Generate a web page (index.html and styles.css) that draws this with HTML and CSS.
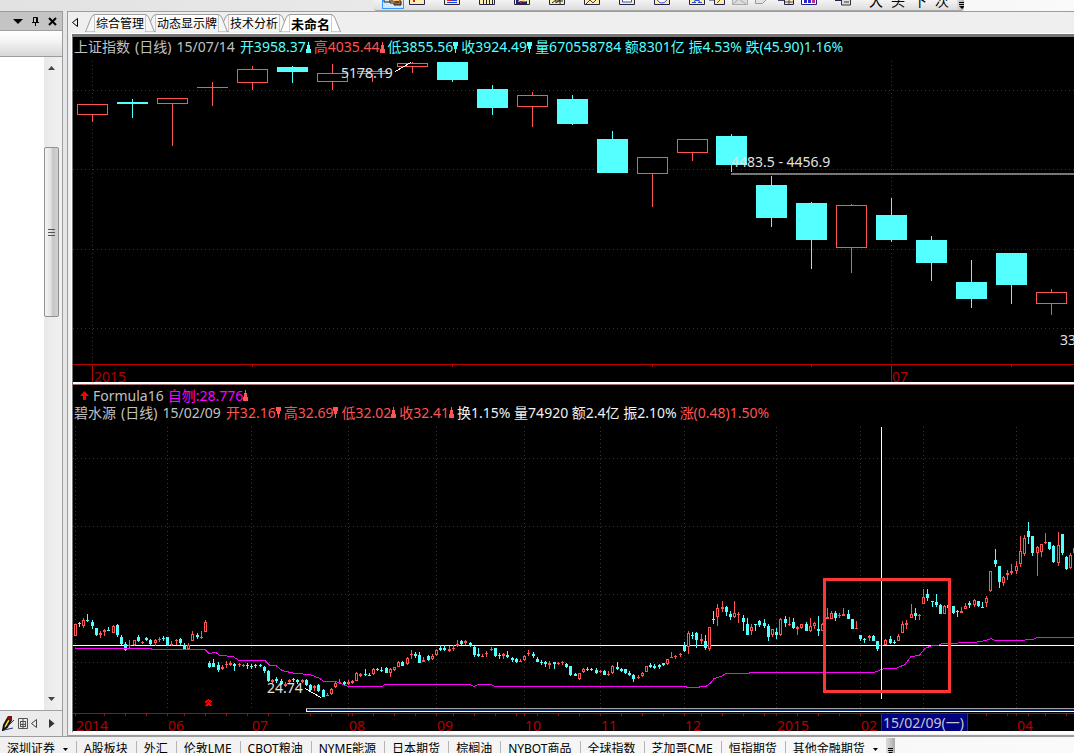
FILE: index.html
```html
<!DOCTYPE html>
<html lang="zh-CN">
<head>
  <meta charset="UTF-8">
  <meta name="viewport" content="width=device-width, initial-scale=1.0">
  <title>上证指数</title>
  <link rel="stylesheet" href="styles.css">
</head>
<body>
  <div class="top-strip">
    <div class="toolbar">
      <button class="tool active" aria-label="手型"><svg width="20" height="6"><path d="M1 0h5v2h5v3h7V0z" fill="#a8682c"/><path d="M1 0v2h6v1h4v2h7V1M13 0v3M15 0v3" fill="none" stroke="#222"/><path d="M10 0h6v1h-6z" fill="#f4c07c"/></svg></button>
      <button class="tool" aria-label="标记"><svg width="16" height="5"><path class="note" d="M.5-5v9.500h15v-9.500z"/><path d="M4 0h2v2H4z" fill="#d02020"/></svg></button>
      <button class="tool" aria-label="表格"><svg width="16" height="5"><path class="note" d="M.5-5v9.500h15v-9.500z"/><path d="M3 .5h4" stroke="#e02020"/><path d="M7 .5h6M3 2.500h10" stroke="#2040e0"/></svg></button>
      <button class="tool" aria-label="柱线"><svg width="16" height="5"><path class="note" d="M.5-5v9.500h15v-9.500z"/><path d="M4.500 0v4M7.500 0v4M10.500 0v4M13.500 0v4" stroke="#222"/></svg></button>
      <button class="tool" aria-label="走势"><svg width="16" height="5"><path class="note" d="M.5-5v9.500h15v-9.500z"/><path d="M2 4V0h3l-1 2 3-1 3 1 3-1v3z" fill="#202070"/><path d="M6 3l3-2 2 1" stroke="#e04020" fill="none"/></svg></button>
      <button class="tool" aria-label="分析"><svg width="16" height="5"><path class="note" d="M.5-5v9.500h15v-9.500z"/><path d="M3 3l4-3v3l4-3v4M8 1h6" fill="none" stroke="#222"/></svg></button>
      <button class="tool" aria-label="折线"><svg width="16" height="5"><path class="note" d="M.5-5v9.500h15v-9.500z"/><path d="M2 4l4-4 3 3 4-4" fill="none" stroke="#444"/></svg></button>
      <button class="tool" aria-label="矩形"><svg width="16" height="5"><path class="note" d="M.5-5v9.500h15v-9.500z"/><path d="M3.500-3v5h9v-5" fill="#fff" stroke="#2850e0"/></svg></button>
      <button class="tool" aria-label="圆形"><svg width="16" height="5"><path class="note" d="M.5-5v9.500h15v-9.500z"/><circle cx="8" cy="-2" r="5" fill="#fff" stroke="#2850e0"/></svg></button>
      <button class="tool narrow" aria-label="文字"><svg width="16" height="5"><path class="note" d="M.5-5v9.500h15v-9.500z"/><path d="M3 2.500h4M9 2.500h4M5.500 2l1-3M10.500 2l-1-3M6 .5h4" fill="none" stroke="#2850e0"/></svg></button>
      <button class="tool small" aria-label="删除"><svg width="16" height="5"><path class="note" d="M5.500-5v9.500h10v-9.500z"/><path d="M0 .5h5" stroke="#889"/><path d="M8 3l4-4" stroke="#d02020"/></svg></button>
      <button class="tool small" aria-label="信封"><svg width="16" height="5"><path d="M.5-5v9.500h15v-9.500z" fill="#ddd" stroke="#aaa"/><path d="M1 4l6-5 7 5" stroke="#aaa" fill="none"/></svg></button>
      <button class="tool small" aria-label="立方体"><svg width="16" height="5"><path d="M.5-4v7.500h7l4-4v-4z" fill="#e4e4e4" stroke="#999"/></svg></button>
      <button class="tool small" aria-label="数据"><svg width="16" height="5"><path class="note" d="M6.500-5v9.500h9v-9.500z"/><path d="M0 .5h6M7 2h8M11 0v4" stroke="#447" /></svg></button>
      <button class="tool small" aria-label="统计"><svg width="16" height="5"><path d="M.5-5v9.500h15v-9.500z" fill="#fff" stroke="#202070"/><path d="M3 0h3v3H3zM7-1h3v4H7z" fill="#2828d0"/><path d="M11-1h3v4h-3z" fill="#c02890"/></svg></button>
      <button class="tool spaced" aria-label="计算"><svg width="16" height="6"><path class="note" d="M0-3v3.500h15v-4z"/><path d="M6.500-2v7h9v-7z" fill="#ddd" stroke="#333"/><path d="M9 2h5" stroke="#333"/></svg></button>
      <button class="tool word">大</button>
      <button class="tool word">头</button>
      <button class="tool word">下</button>
      <button class="tool word">次</button>
      <button class="grip" aria-label="更多"><svg width="9" height="10"><path d="M2 2.500h6M2 4.500h6" stroke="#000"/><path d="M2 6h6l-3 3z"/></svg></button>
    </div>
  </div>

  <div class="workspace">
    <aside class="side">
      <div class="side-title">
        <button class="icon" aria-label="菜单"><svg width="10" height="10"><path d="M0 3h10L5 8z"/></svg></button>
        <button class="icon" aria-label="固定"><svg width="9" height="10"><path d="M2.500 6V1.500h4V6M1 6.500h7M4.500 7v3M5.500 1v5" fill="none" stroke="#000"/></svg></button>
        <button class="icon" aria-label="关闭"><svg width="9" height="9"><path d="M1 1l7 7M8 1L1 8" stroke="#000" stroke-width="2"/></svg></button>
      </div>
      <div class="side-tools"></div>
      <div class="side-list">
        <div class="scroll">
          <svg width="8" height="5"><path d="M0 5h7L3.500 1z" fill="#444"/></svg>
          <div class="thumb"><svg width="7" height="9"><path d="M0 1.500h7M0 4.500h7M0 7.500h7" stroke="#555"/></svg></div>
          <svg width="8" height="5"><path d="M0 0h7L3.500 4z" fill="#444"/></svg>
        </div>
      </div>
      <div class="side-foot">
        <button class="icon" aria-label="编辑"><svg width="13" height="15"><path d="M2 9l4-7 3 2-4 7-4 3z" fill="#ffd83c" stroke="#111" stroke-width="2"/><path d="M6 0h4v3l-2 2-3-2z" fill="#801010"/><path d="M2 14l9-2M6 10l6-6" stroke="#2030a0"/></svg></button>
        <button class="icon" aria-label="网格"><svg width="10" height="11"><path d="M.5.5h9v10h-9zM2 3.500h6M2 6.500h6M2 8.500h6M5 1v9M2.500 3v5M7.500 3v5" fill="none" stroke="#555"/></svg></button>
        <button class="icon" aria-label="向左"><svg width="6" height="9"><path d="M5.500.5v8l-5-4z" fill="none" stroke="#444"/></svg></button>
        <button class="icon last" aria-label="向右"><svg width="6" height="9"><path d="M0 0v9l5.500-4.500z" fill="#333"/></svg></button>
      </div>
    </aside>

    <main class="window">
      <nav class="tabs">
        <button class="icon back" aria-label="后退"><svg width="6" height="9"><path d="M5.500.5v8l-5-4z" fill="none" stroke="#000"/></svg></button>
        <button class="tab first"><svg class="edge left" width="10" height="18"><path d="M.5 18L6 4Q7.500.5 10 .5V18z"/></svg><span>综合管理</span><svg class="edge right" width="10" height="18"><path d="M9.500 18L4 4Q2.500.5 0 .5V18z"/></svg></button>
        <button class="tab second"><svg class="edge left" width="10" height="18"><path d="M.5 18L6 4Q7.500.5 10 .5V18z"/></svg><span>动态显示牌</span><svg class="edge right" width="10" height="18"><path d="M9.500 18L4 4Q2.500.5 0 .5V18z"/></svg></button>
        <button class="tab"><svg class="edge left" width="10" height="18"><path d="M.5 18L6 4Q7.500.5 10 .5V18z"/></svg><span>技术分析</span><svg class="edge right" width="10" height="18"><path d="M9.500 18L4 4Q2.500.5 0 .5V18z"/></svg></button>
        <button class="tab current"><svg class="edge left" width="10" height="18"><path d="M.5 18L6 4Q7.500.5 10 .5V18z"/></svg><span>未命名</span><svg class="edge right" width="10" height="18"><path d="M9.500 18L4 4Q2.500.5 0 .5V18z"/></svg></button>
      </nav>

      <div class="charts">
        <section class="pane pane-index">
          <p class="quote">
            <span class="security"><b>上证指数</b><b>(日线)</b><b>15/07/14</b></span>
            <span class="down">开3958.37<svg class="mark" width="5" height="11"><path d="M2 0h1v3h1v4h1v4H0V7h1V3h1z"/></svg></span>
            <span class="up">高4035.44<svg class="mark" width="5" height="11"><path d="M2 0h1v3h1v4h1v4H0V7h1V3h1z"/></svg></span>
            <span class="down">低3855.56<svg class="mark" width="5" height="11"><path d="M0 0h5v4H4v3H3v4H2V7H1V4H0z"/></svg></span>
            <span class="down">收3924.49<svg class="mark" width="5" height="11"><path d="M0 0h5v4H4v3H3v4H2V7H1V4H0z"/></svg></span>
            <span class="down">量670558784 额8301亿 振4.53% 跌(45.90)1.16%</span>
          </p>
          <svg class="plot" id="index-plot"></svg>
        </section>
        <section class="pane pane-stock">
          <p class="quote formula">
            <svg width="9" height="9"><path d="M4.500 0L9 5H6v4H3V5H0z" fill="#f00"/></svg>
            <span>Formula16</span>
            <span class="magenta">自刎:28.776<svg class="mark" width="5" height="11"><path d="M2 0h1v3h1v4h1v4H0V7h1V3h1z" fill="#ff5454"/></svg></span>
          </p>
          <p class="quote">
            <span class="security"><b>碧水源</b><b>(日线)</b><b>15/02/09</b></span>
            <span class="up">开32.16<svg class="mark" width="5" height="11"><path d="M0 0h5v4H4v3H3v4H2V7H1V4H0z"/></svg></span>
            <span class="up">高32.69<svg class="mark" width="5" height="11"><path d="M0 0h5v4H4v3H3v4H2V7H1V4H0z"/></svg></span>
            <span class="up">低32.02<svg class="mark" width="5" height="11"><path d="M2 0h1v3h1v4h1v4H0V7h1V3h1z"/></svg></span>
            <span class="up">收32.41<svg class="mark" width="5" height="11"><path d="M2 0h1v3h1v4h1v4H0V7h1V3h1z"/></svg></span>
            <span class="plain">换1.15% 量74920 额2.4亿 振2.10%</span>
            <span class="up">涨(0.48)1.50%</span>
          </p>
          <svg class="plot" id="stock-plot"></svg>
        </section>
      </div>
    </main>
  </div>

  <footer class="markets">
    <button class="market menu">深圳证券<svg width="5" height="3"><path d="M0 0h5L2.500 3z"/></svg></button>
    <button class="market">A股板块</button>
    <button class="market">外汇</button>
    <button class="market">伦敦LME</button>
    <button class="market">CBOT粮油</button>
    <button class="market">NYME能源</button>
    <button class="market">日本期货</button>
    <button class="market">棕榈油</button>
    <button class="market">NYBOT商品</button>
    <button class="market">全球指数</button>
    <button class="market">芝加哥CME</button>
    <button class="market">恒指期货</button>
    <button class="market menu">其他金融期货<svg width="5" height="3"><path d="M0 0h5L2.500 3z"/></svg></button>
    <button class="grip" aria-label="更多"><svg width="9" height="16"><path d="M2 10.500h5M2 12.500h5" stroke="#000"/><path d="M2 14h5l-2.500 2z"/></svg></button>
  </footer>
  <script src="charts.js"></script>
</body>
</html>
```

FILE: styles.css
```css
* {
  box-sizing: border-box;
}

body {
  display: flex;
  flex-direction: column;
  height: 100vh;
  margin: 0;
  overflow: hidden;
  background: #e6e6e6;
  color: #000;
  font-family: "Noto Sans", "Noto Sans CJK SC", sans-serif;
  font-size: 12px;
}

button {
  margin: 0;
  padding: 0;
  border: none;
  background: none;
  color: inherit;
  font: inherit;
}

svg {
  display: block;
  flex: none;
}

/* top toolbar */
.top-strip {
  flex: none;
  height: 11px;
  padding-left: 374px;
  background: linear-gradient(to right, #e2e2e2, #e9e9e9 35%, #fafafa);
}

.toolbar {
  display: flex;
  width: 590px;
  height: 11px;
  padding-left: 8px;
  background: linear-gradient(#f4f4f4, #dcdcdc);
  border-bottom: 1px solid #a6a6a6;
  border-radius: 0 0 3px 3px;
  overflow: hidden;
}

.tool {
  display: flex;
  flex: none;
  width: 35px;
  height: 9px;
}

.tool.active {
  width: 22px;
  margin-right: 5px;
  border: 1px solid #3399ff;
  border-top: none;
  background: #d4e8fb;
}

.tool.narrow {
  width: 20px;
}

.tool.small {
  width: 23px;
}

.tool.spaced {
  width: 34px;
  margin-left: 11px;
}

.tool.word {
  width: 22px;
  height: 6px;
  font-size: 14px;
  line-height: 1px;
}

.note {
  fill: #fdeeb0;
  stroke: #222244;
}

.grip {
  margin-left: auto;
  background: linear-gradient(to right, #ddd, #aaa);
}

/* main area */
.workspace {
  display: flex;
  flex: 1;
  min-height: 0;
  gap: 4px;
}

.icon {
  display: flex;
  align-items: center;
}

.side {
  display: flex;
  flex: none;
  flex-direction: column;
  width: 63px;
  background: #ebebeb;
  border-right: 1px solid #9c9c9c;
}

.side-title {
  display: flex;
  align-items: center;
  justify-content: flex-end;
  gap: 8px;
  height: 20px;
  padding-right: 5px;
  background: #c4c4c4;
  border-top: 1px solid #9c9c9c;
  border-bottom: 1px solid #a0a0a0;
}

.side-tools {
  height: 26px;
  background: linear-gradient(#fff, #f4f4f4 40%, #d8d8d8);
  border-bottom: 1px solid #9c9c9c;
}

.side-list {
  display: flex;
  flex: 1;
  justify-content: flex-end;
  background: #fff;
  border-bottom: 1px solid #a0a0a0;
}

.scroll {
  display: flex;
  flex-direction: column;
  align-items: center;
  width: 18px;
  padding: 8px 3px 8px 0;
  background: linear-gradient(to right, #e9e9e9, #f1f1f1);
}

.thumb {
  display: flex;
  align-items: center;
  justify-content: center;
  width: 15px;
  height: 170px;
  margin: 77px 0 auto;
  background: linear-gradient(to right, #f4f4f4, #e2e2e2 45%, #c6c6c6 60%, #d2d2d2);
  border: 1px solid #909090;
  border-radius: 2px;
}

.side-foot {
  display: flex;
  align-items: center;
  gap: 3px;
  height: 25px;
  padding-left: 2px;
}

.side-foot .last {
  margin-left: 9px;
}

.window {
  display: flex;
  flex: 1;
  flex-direction: column;
  min-width: 0;
  padding: 0 0 2px 4px;
  background: #efefef;
  border: 1px solid #9c9c9c;
  border-right: none;
}

.tabs {
  display: flex;
  flex: none;
  align-items: flex-end;
  height: 22px;
  padding-bottom: 2px;
}

.back {
  align-self: center;
  margin-right: 7px;
}

/* each tab sits a little under the one before it */
.tab {
  position: relative;
  display: flex;
  height: 18px;
  margin-right: -9px;
}

.tab.first {
  z-index: 2;
}

.tab.second {
  z-index: 1;
}

.tab.current {
  z-index: 3;
  font-size: 13px;
  font-weight: bold;
}

.tab span {
  height: 18px;
  padding: 0 1px;
  line-height: 18px;
  background: linear-gradient(#fff, #f0f0f0);
  border-top: 1px solid #9c9c9c;
}

.edge path {
  fill: #f6f6f6;
  stroke: #9c9c9c;
}

.tab.current span {
  background: #fff;
}

.tab.current .edge path {
  fill: #fff;
}

/* charts */
.charts {
  display: flex;
  flex: 1;
  flex-direction: column;
  min-height: 0;
  border-top: 3px solid #777;
  border-left: 1px solid #777;
  border-bottom: 2px solid #fff;
  outline: 1px solid #fff;
}

.pane {
  display: flex;
  flex-direction: column;
  min-height: 0;
  overflow: hidden;
  background: #000;
}

.pane-index {
  flex: none;
  height: 345px;
}

.pane-stock {
  flex: 1;
  padding-top: 3px;
  border-top: 2px solid #fff;
  box-shadow: inset 0 1px 0 #a06a6a;
}

.quote {
  display: flex;
  flex: none;
  gap: 3px;
  height: 20px;
  margin: 0;
  padding-left: 1px;
  color: #c0c0c0;
  font-size: 14px;
  line-height: 20px;
  white-space: nowrap;
}

.quote span {
  display: flex;
  align-items: center;
}

.quote b {
  font-weight: normal;
}

.quote .security {
  gap: 5px;
  margin-right: 2px;
}

.pane-stock .quote {
  height: 17px;
  line-height: 17px;
}

.pane-stock .formula {
  gap: 4px;
  align-items: center;
  padding-left: 7px;
}

.mark {
  fill: currentColor;
}

.up {
  color: #ff5454;
}

.down {
  color: #54ffff;
}

.plain {
  color: #f0f0f0;
}

.magenta {
  color: #ff00ff;
}

.plot {
  flex: 1;
  width: 100%;
  min-height: 0;
  overflow: hidden;
  font-size: 14px;
  shape-rendering: crispEdges;
}

.grid {
  stroke: #b00000;
  stroke-dasharray: 1 3;
}

.axis {
  fill: none;
  stroke: #c00000;
}

.axis-label {
  fill: #b00000;
}

.price {
  fill: #e0e0e0;
}

.rising {
  fill: #000;
  stroke: #ff5454;
}

.falling {
  fill: #54ffff;
  stroke: #54ffff;
}

.average {
  fill: none;
  stroke: #ff00ff;
}

.average.flat {
  stroke: #00e000;
}

.cross {
  stroke: #fff;
}

.focus-box {
  fill: none;
  stroke: #ff3636;
  stroke-width: 3;
}

.level {
  stroke: #777;
  stroke-width: 2;
}

.date-box {
  fill: #000080;
  stroke: #c00000;
}

.date-label {
  fill: #c8c8c8;
}

/* market tabs */
.markets {
  display: flex;
  flex: none;
  height: 17px;
  padding-top: 4px;
  overflow: hidden;
  background: linear-gradient(to right, #f0f0f0, #fafafa);
  border-top: 1px solid #9c9c9c;
}

.market {
  display: flex;
  flex: none;
  height: 16px;
  padding: 0 8px 0 7px;
  line-height: 16px;
  white-space: nowrap;
  border-left: 1px solid #b4b4b4;
}

.market:first-child {
  border-left: none;
}

.market.menu svg {
  margin: 7px 0 0 8px;
}

.markets .grip {
  height: 16px;
  margin: -3px 0 0;
}
```

FILE: charts.js
```js
const NS = 'http://www.w3.org/2000/svg';

// x, high, body top, body bottom, low, direction
const indexCandles = [
  [92, 104, 104, 115, 122, 'u'], [132, 99, 102, 104, 118, 'd'], [172, 98, 98, 104, 146, 'u'],
  [212, 82, 87, 88, 106, 'u'], [252, 66, 69, 83, 90, 'u'], [292, 66, 67, 72, 83, 'd'],
  [332, 64, 73, 82, 90, 'u'], [372, 70, 71, 74, 82, 'u'], [412, 62, 63, 67, 73, 'u'],
  [452, 62, 62, 80, 82, 'd'], [492, 85, 89, 108, 115, 'd'], [532, 92, 95, 107, 127, 'u'],
  [572, 95, 99, 124, 125, 'd'], [612, 131, 139, 173, 173, 'd'], [652, 157, 157, 174, 207, 'u'],
  [692, 139, 139, 153, 161, 'u'], [731, 134, 136, 165, 172, 'd'], [771, 176, 185, 218, 227, 'd'],
  [811, 202, 203, 240, 269, 'd'], [851, 204, 205, 248, 273, 'u'], [891, 198, 215, 240, 242, 'd'],
  [931, 236, 240, 263, 281, 'd'], [971, 260, 282, 299, 308, 'd'], [1011, 253, 253, 285, 304, 'd'],
  [1051, 289, 292, 304, 315, 'u']
];

// direction, high, body top, body bottom, low
const stockCandles = `
u 624 624 636 636;d 622 623 624 627;u 618 620 626 628;d 614 620 621 622;d 620 622 626 629;
d 628 628 635 636;u 631 633 635 638;u 629 630 632 636;d 627 630 631 631;u 625 626 633 633;
d 624 625 635 637;d 635 637 644 645;d 642 644 650 651;u 640 645 646 648;u 640 640 645 646;
d 635 637 641 642;u 641 642 643 644;d 637 638 640 641;d 639 640 644 645;u 639 640 643 646;
u 637 639 640 642;d 636 638 639 641;d 637 637 645 646;u 641 644 645 646;u 639 640 641 645;
d 638 639 643 645;d 643 645 649 649;u 643 645 649 649;u 631 634 641 641;d 633 635 637 639;
u 631 637 638 639;u 620 622 632 632;d 661 663 667 668;d 659 663 667 667;d 662 665 670 672;
u 665 667 669 670;u 661 664 665 668;u 661 663 665 666;d 663 664 666 671;u 663 664 665 667;
u 664 665 666 667;d 663 665 666 669;d 664 666 667 669;d 664 665 666 668;d 664 665 666 667;
d 666 667 671 673;d 670 671 681 682;u 679 680 682 683;d 677 679 681 683;d 679 681 684 685;
u 682 684 686 687;u 679 680 682 684;d 678 679 680 682;d 679 680 682 684;u 679 680 682 683;
d 679 680 685 686;d 684 685 690 692;u 685 686 688 691;d 684 685 691 692;d 689 690 697 697;
u 693 695 696 696;u 688 689 694 695;u 682 683 687 688;u 679 682 683 684;d 681 682 684 686;
u 680 682 684 685;u 680 681 683 684;u 672 673 681 681;u 673 674 676 677;d 669 674 675 676;
d 673 675 676 676;u 668 669 674 675;d 668 669 670 671;d 667 670 671 672;d 667 668 673 673;
u 668 669 673 677;u 667 667 670 671;u 661 662 667 667;d 661 662 666 666;u 657 658 664 665;
u 650 654 655 659;d 652 654 656 658;d 652 655 663 663;u 657 660 662 662;d 655 656 660 661;
u 654 656 659 660;u 649 650 655 656;d 645 648 650 651;d 645 648 650 651;u 646 649 651 652;
u 645 648 649 651;u 640 644 646 647;d 640 641 644 645;u 640 641 643 645;d 642 643 646 647;
d 646 647 655 657;d 648 654 656 657;u 654 656 657 657;u 651 653 654 657;u 647 649 650 651;
d 648 648 656 657;d 653 655 656 659;u 653 654 656 659;d 651 655 657 658;d 657 658 660 662;
d 658 659 662 663;u 659 661 662 662;u 655 656 660 661;u 650 653 654 656;d 652 654 656 658;
d 657 659 662 662;d 660 662 663 665;d 661 662 664 667;u 661 663 665 669;d 662 662 664 669;
u 662 663 664 665;u 661 662 663 665;d 663 664 667 668;d 666 666 675 676;d 673 674 676 676;
u 673 673 679 680;u 668 669 672 673;d 667 669 670 671;d 668 669 670 671;d 668 670 673 674;
u 670 671 672 673;d 670 671 675 675;u 671 674 675 676;u 665 666 673 674;d 662 667 669 670;
d 668 669 671 672;d 669 669 673 674;d 671 673 675 676;d 674 675 679 682;u 675 677 678 679;
u 672 673 676 677;u 666 666 672 672;d 663 665 667 668;d 664 666 668 669;d 664 665 667 669;
d 663 663 665 666;u 659 659 664 665;u 652 657 658 658;u 655 656 657 659;u 653 654 655 657;
d 642 646 651 652;u 631 633 647 654;d 632 635 636 639;d 632 633 640 648;u 634 639 641 644;
d 635 641 648 650;u 627 627 649 651;d 611 619 620 624;u 604 608 617 626;u 601 607 609 612;
d 606 607 612 616;d 611 614 617 620;u 601 613 617 618;u 612 614 615 623;d 615 618 622 631;
d 618 624 635 635;u 624 627 631 635;d 624 624 625 631;d 620 621 625 627;d 619 623 626 628;
d 624 626 637 641;u 629 629 635 637;d 628 632 635 639;u 618 619 635 636;d 616 619 623 627;
u 617 624 625 626;d 618 622 628 629;u 626 627 629 635;u 624 624 628 629;d 622 624 631 631;
u 618 626 631 632;u 622 623 626 629;d 616 629 631 636;u 623 624 631 631;u 608 617 619 619;
u 611 613 619 619;d 611 613 618 621;u 613 615 616 618;u 608 614 616 616;d 610 614 619 619;
d 619 619 629 629;u 621 628 629 629;d 635 635 639 641;d 638 639 640 643;u 635 636 638 641;
d 635 636 641 641;d 641 641 649 651;u 643 645 646 648;u 639 640 645 645;d 636 639 643 644;
d 640 642 643 644;u 634 636 641 641;u 621 624 633 633;u 620 623 625 629;u 604 614 618 618;
d 608 613 616 620;u 614 615 616 620;u 589 597 604 604;d 589 594 598 601;d 601 601 602 607;
d 594 602 605 607;d 604 605 614 614;u 605 606 614 614;d 605 605 608 608;d 606 606 613 614;
d 610 611 612 617;u 607 611 613 613;u 603 606 609 609;d 601 603 605 608;u 599 600 605 607;
d 601 601 606 607;d 602 607 608 608;u 596 598 603 607;u 571 571 591 592;d 549 560 564 567;
d 566 566 582 588;u 576 577 583 586;u 570 573 575 580;u 564 571 573 575;u 561 566 571 574;
u 536 551 564 567;u 535 538 554 556;d 522 531 537 544;d 536 536 553 556;u 546 547 553 576;
u 544 544 552 557;u 533 542 543 544;d 542 542 549 550;d 545 546 562 563;u 532 545 563 566;
d 534 534 553 555;d 556 557 569 570;u 553 555 568 569;u 540 548 553 555`;

const average = '75,648 150,648 153,649 205,649 209,653 216,652 220,655 233,656 239,660 265,660 270,665 276,665 282,670 295,673 310,674 320,678 324,681 336,681 348,686 382,686 385,684 470,684 474,686 478,684 491,684 495,686 685,686 688,687 693,687 706,686 711,682 714,678 721,676 726,673 749,673 750,672 874,672 884,668 896,668 905,664 911,656 919,655 925,648 932,645 938,645 942,643 974,642 986,640 991,638 995,640 1018,640 1033,639 1037,637 1200,637';

function add(parent, name, attrs, text) {
  const el = document.createElementNS(NS, name);
  for (const key in attrs) el.setAttribute(key, attrs[key]);
  if (text) el.textContent = text;
  parent.appendChild(el);
  return el;
}

function line(parent, cls, x1, y1, x2, y2) {
  add(parent, 'path', { class: cls, d: `M${x1} ${y1}L${x2} ${y2}` });
}

function candle(parent, x, high, top, bottom, low, dir, half) {
  const cls = dir === 'u' ? 'rising' : 'falling';
  line(parent, cls, x + 0.5, high, x + 0.5, low);
  add(parent, 'rect', { class: cls, x: x - half + 0.5, y: top + 0.5, width: half * 2, height: Math.max(bottom - top - 1, 0.01) });
}

function drawIndex() {
  const g = add(document.getElementById('index-plot'), 'g', { transform: 'translate(-73 -57)' });
  [90, 169, 249, 328].forEach(y => line(g, 'grid', 73, y + 0.5, 2000, y + 0.5));
  [92, 891].forEach(x => {
    line(g, 'grid', x + 0.5, 61, x + 0.5, 364);
    line(g, 'axis', x + 0.5, 364, x + 0.5, 384);
  });
  line(g, 'axis', 73, 364.5, 2000, 364.5);
  [252, 452, 652, 811, 1011].forEach(x => line(g, 'axis', x + 0.5, 365, x + 0.5, 367));
  add(g, 'text', { class: 'axis-label', x: 94, y: 382 }, '2015');
  add(g, 'text', { class: 'axis-label', x: 892, y: 382 }, '07');

  indexCandles.forEach(c => candle(g, ...c, 15));
  line(g, 'level', 731, 174, 2000, 174);
  add(g, 'text', { class: 'price', x: 731, y: 167 }, '4483.5 - 4456.9');
  add(g, 'text', { class: 'price', x: 341, y: 78 }, '5178.19');
  line(g, 'cross', 395, 71.5, 411, 62.5);
  add(g, 'text', { class: 'price', x: 1060, y: 345 }, '3373.54');
}

function drawStock() {
  const g = add(document.getElementById('stock-plot'), 'g', { transform: 'translate(-73 -421)' });
  [458, 526, 594, 662].forEach(y => line(g, 'grid', 73, y + 0.5, 2000, y + 0.5));
  const months = { 75: '2014', 167: '06', 251: '07', 348: '08', 436: '09', 524: '10', 600: '11', 684: '12', 776: '2015', 860: '02', 923: '', 1016: '04' };
  for (const m in months) {
    const x = Number(m);
    line(g, 'grid', x + 0.5, 427, x + 0.5, 708);
    add(g, 'text', { class: 'axis-label', x: x + 1, y: 731 }, months[m]);
  }

  line(g, 'axis', 73, 713.5, 2000, 713.5);
  [75, 104, 125, 146, 167, 184, 205, 226, 247, 268, 289, 310, 331, 348, 352, 373, 394, 415, 436, 453, 474, 495, 516, 524, 537, 558, 579, 600, 621, 642, 663, 684, 701, 722, 743, 764, 776, 797, 818, 839, 860, 986, 1007, 1016, 1028, 1045, 1066]
    .forEach(x => line(g, 'axis', x + 0.5, 714, x + 0.5, 716));

  line(g, 'cross', 73, 645.5, 2000, 645.5);
  stockCandles.trim().split(';').forEach((row, i) => {
    const [dir, high, top, bottom, low] = row.trim().split(' ');
    candle(g, Math.floor(75.2 + i * 4.2), +high, +top, +bottom, +low, dir, 1);
  });
  add(g, 'polyline', { class: 'average', points: average, transform: 'translate(0 .5)' });
  line(g, 'average flat', 932, 645.5, 938, 645.5);

  // range bar above the time axis
  add(g, 'rect', { x: 306, y: 708, width: 1700, height: 4, fill: '#fff' });
  add(g, 'rect', { x: 306, y: 708, width: 1700, height: 1, fill: '#a0a0a0' });
  add(g, 'rect', { x: 307, y: 709, width: 1700, height: 2, fill: '#0a246a' });

  add(g, 'text', { class: 'price', x: 267, y: 693 }, '24.74');
  line(g, 'cross', 305, 688.5, 321, 697.5);
  add(g, 'path', { d: 'M205.500 702.500L208.500 700L211.500 702.500M205.500 706L208.500 703.500L211.500 706', fill: 'none', stroke: '#f00', 'stroke-width': 2 });

  line(g, 'cross', 881.5, 427, 881.5, 699);
  add(g, 'rect', { class: 'focus-box', x: 824.5, y: 579.5, width: 125, height: 112 });
  add(g, 'rect', { class: 'date-box', x: 881.5, y: 713.5, width: 86, height: 20 });
  add(g, 'text', { class: 'date-label', x: 883, y: 728 }, '15/02/09(一)');
}

drawIndex();
drawStock();
```
